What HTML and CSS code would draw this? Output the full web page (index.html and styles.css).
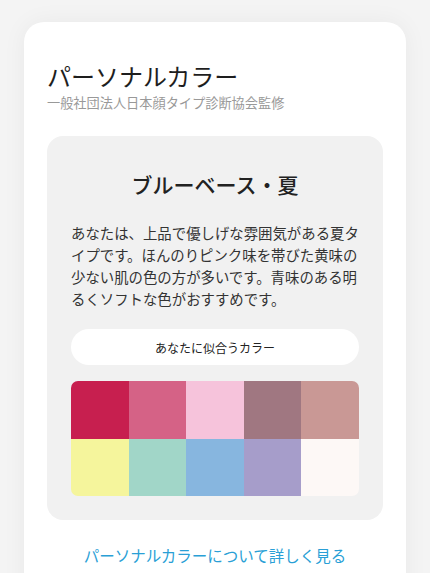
FILE: index.html
```html
<!DOCTYPE html>
<html lang="ja">
<head>
<meta charset="utf-8">
<link rel="stylesheet" href="styles.css">
</head>
<body>
<div class="card">
  <h1 class="title">パーソナルカラー</h1>
  <p class="sub">一般社団法人日本顔タイプ診断協会監修</p>
  <div class="box">
    <h2 class="type">ブルーベース・夏</h2>
    <p class="desc">あなたは、上品で優しげな雰囲気がある夏タイプです。ほんのりピンク味を帯びた黄味の少ない肌の色の方が多いです。青味のある明るくソフトな色がおすすめです。</p>
    <div class="pill">あなたに似合うカラー</div>
    <div class="palette">
      <span class="c1"></span><span class="c2"></span><span class="c3"></span><span class="c4"></span><span class="c5"></span>
      <span class="c6"></span><span class="c7"></span><span class="c8"></span><span class="c9"></span><span class="c10"></span>
    </div>
  </div>
  <a class="more" href="#">パーソナルカラーについて詳しく見る</a>
</div>
</body>
</html>
```

FILE: styles.css
```css
* { box-sizing: border-box; }
html, body { margin: 0; padding: 0; }
body {
  background: #f4f4f4;
  font-family: "Noto Sans CJK JP", "Noto Sans", sans-serif;
  color: #333;
  overflow: hidden;
}
.card {
  margin: 22px 24px 0;
  width: 382px;
  background: #fff;
  border-radius: 20px;
  padding: 38px 23px 60px;
  box-shadow: 0 0 24px rgba(0, 0, 0, 0.05);
}
.title {
  margin: 0;
  font-size: 24px;
  line-height: 32px;
  font-weight: 400;
  color: #1e1e1e;
}
.sub {
  margin: 2px 0 0;
  font-size: 13.2px;
  line-height: 18px;
  color: #999;
}
.box {
  margin-top: 24px;
  background: #f1f1f1;
  border-radius: 16px;
  padding: 33px 24px 24px;
}
.type {
  margin: 0;
  text-align: center;
  font-size: 21px;
  line-height: 30px;
  font-weight: 500;
  color: #222;
}
.desc {
  margin: 23px -4px 0 0;
  font-size: 14.4px;
  line-height: 22px;
  color: #333;
}
.pill {
  margin-top: 19px;
  height: 36px;
  border-radius: 18px;
  background: #fff;
  display: flex;
  align-items: center;
  justify-content: center;
  font-size: 12px;
  color: #222;
}
.palette {
  margin-top: 16px;
  display: grid;
  grid-template-columns: repeat(5, 1fr);
  border-radius: 7px;
  overflow: hidden;
}
.palette span { display: block; height: 57.5px; }
.c1 { background: #c71f4f; }
.c2 { background: #d56286; }
.c3 { background: #f6c3db; }
.c4 { background: #a07781; }
.c5 { background: #c99895; }
.c6 { background: #f5f59c; }
.c7 { background: #a1d6c8; }
.c8 { background: #87b6df; }
.c9 { background: #a69dca; }
.c10 { background: #fdf8f6; }
.more {
  display: block;
  margin-top: 23px;
  text-align: center;
  font-size: 15.5px;
  line-height: 24px;
  color: #2a9fd6;
  text-decoration: none;
}
```
